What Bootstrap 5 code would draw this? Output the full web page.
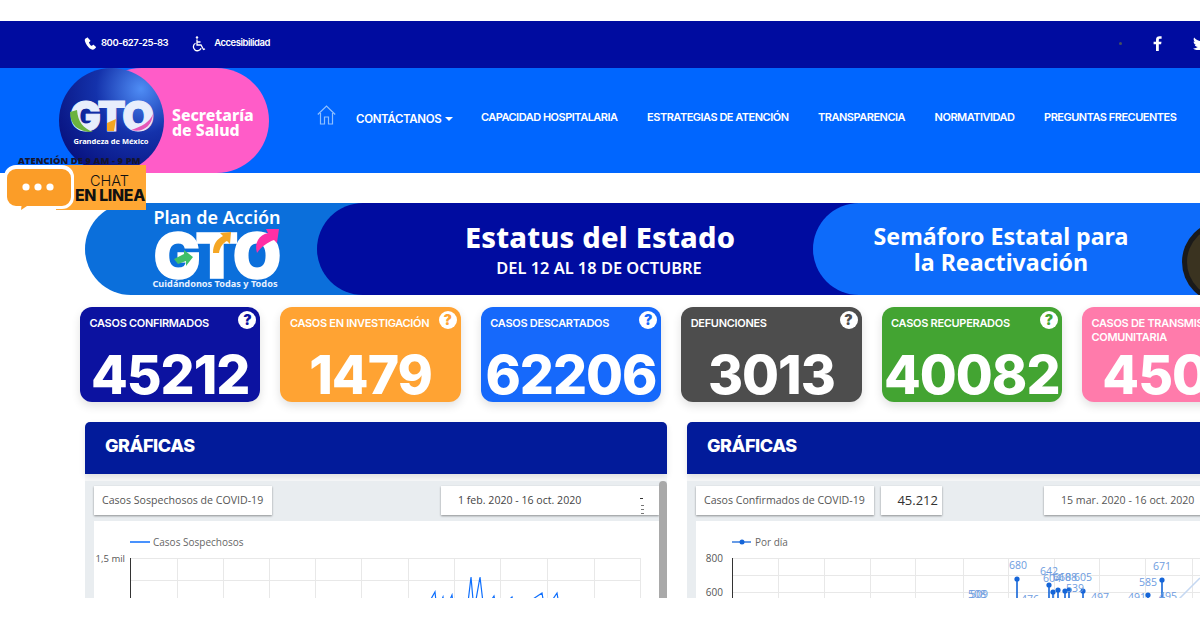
<!DOCTYPE html>
<html lang="es">
<head>
    <meta charset="UTF-8">
    <meta name="viewport" content="width=device-width, initial-scale=1.0">
    <title>Secretaría de Salud GTO</title>
    <link href="https://cdn.jsdelivr.net/npm/bootstrap@5.3.0/dist/css/bootstrap.min.css" rel="stylesheet">
    <style>
        html, body { height: 620px; overflow: hidden; background: #fff; }
        body { font-family: "Inter", "Liberation Sans", sans-serif; }
        .page-frame { margin-top: 21px; height: 577px; overflow: hidden; position: relative; }

        /* franja superior */
        .top-strip { height: 47px; background: #000ca0; color: #fff; font-size: 9.5px; font-weight: 600; padding-left: 84px; padding-bottom: 2px; letter-spacing: -.46px; }
        .top-strip svg { display: block; }
        .social-box { margin-left: auto; margin-right: -9px; gap: 31px; }
        .tiny-dot { width: 3px; height: 3px; border-radius: 50%; background: #45505f; }

        /* navbar */
        .main-bar { height: 105px; background: #0066ff; padding: 0; flex-wrap: nowrap; justify-content: flex-start; }
        .logo-box { margin-left: 59px; width: 210px; height: 105px; flex: none; }
        .home-link { margin-left: 48px; margin-right: 20px; margin-top: -14px; }
        .main-links { gap: 29.5px; flex-wrap: nowrap; white-space: nowrap; margin-top: -6px; }
        .main-links .nav-link { color: #fff; padding: 0; font-size: 11px; font-weight: 600; letter-spacing: -.5px; }
        .main-links .first-link { font-size: 11.5px; margin-top: 4px; margin-right: -2px; letter-spacing: -.33px; }
        .main-links .dropdown-toggle::after { vertical-align: .15em; margin-left: 4px; border-top-width: 4px; border-left-width: 4px; border-right-width: 4px; }

        /* chat */
        .chat-box { position: absolute; left: 6px; top: 134px; width: 140px; height: 60px; }
        .chat-hours { position: absolute; left: 12px; top: -1px; font-size: 9.3px; font-weight: 800; color: #15152e; white-space: nowrap; font-family: "Open Sans", sans-serif; letter-spacing: .1px; }
        .chat-label { position: absolute; left: 50px; top: 10px; width: 90px; height: 45px; background: #ffa733; color: #111; text-align: right; padding-right: 1px; line-height: 15px; padding-top: 8px; }
        .chat-label span { display: block; }
        .chat-label .chat-one { font-size: 14.5px; font-weight: 300; padding-right: 16px; }
        .chat-label .chat-two { font-size: 15.8px; font-weight: 800; letter-spacing: -.3px; white-space: nowrap; }
        .chat-bubble { position: absolute; left: -2px; top: 9px; }

        /* banner */
        .banner-wrap { margin: 30px 0 0 85px; width: 1200px; height: 92px; }
        .plan-part { background: #0b6fdb; border-radius: 46px 0 0 46px; color: #fff; font-family: "Noto Sans", sans-serif; height: 92px; }
        .plan-logo { width: 232px; flex: none; }
        .state-part { background: #000ca0; border-radius: 46px 0 0 46px; color: #fff; flex: 1; height: 92px; }
        .state-text { width: 496px; flex: none; text-align: center; font-family: "Noto Sans", sans-serif; padding-left: 68px; }
        .state-title { font-size: 29px; font-weight: 800; line-height: 30px; letter-spacing: .2px; margin-left: 2px; white-space: nowrap; }
        .state-date { font-size: 16.4px; font-weight: 600; line-height: 18px; margin-top: 7px; white-space: nowrap; }
        .light-part { background: #0d6bfa; border-radius: 46px 0 0 46px; flex: 1; height: 92px; overflow: hidden; }
        .light-text { width: 368px; flex: none; text-align: center; font-family: "Noto Sans", sans-serif; font-size: 23.2px; font-weight: 700; line-height: 26px; padding-left: 8px; white-space: nowrap; }
        .medal-icon { flex: none; margin-top: 0; }

        /* tarjetas */
        .stat-row { margin: 12px 0 0 80px; gap: 20px; width: 1300px; flex-wrap: nowrap; }
        .stat-box { width: 180.4px; height: 95px; flex: none; border: 0; border-radius: 12px; color: #fff; position: relative; box-shadow: 0 4px 10px rgba(0,0,0,.12); overflow: hidden; }
        .stat-name { font-size: 11px; font-weight: 600; line-height: 14px; position: absolute; left: 9.5px; top: 9px; letter-spacing: -.3px; white-space: nowrap; }
        .stat-num { font-family: "Inter", sans-serif; font-size: 53.5px; font-weight: 800; line-height: 60px; text-align: center; position: absolute; left: 0; right: 0; bottom: -3px; letter-spacing: -1px; white-space: nowrap; }
        .stat-help { position: absolute; right: 4px; top: 4px; width: 18px; height: 18px; border-radius: 50%; background: #fff; font-size: 14px; font-weight: 900; line-height: 18px; text-align: center; }
        .tone-navy { background: #0c12a0; } .tone-navy .stat-help { color: #0c12a0; }
        .tone-orange { background: #ffa333; } .tone-orange .stat-help { color: #ffa333; }
        .tone-blue { background: #1669fb; } .tone-blue .stat-help { color: #1669fb; }
        .tone-gray { background: #4d4d4d; } .tone-gray .stat-help { color: #4d4d4d; }
        .tone-green { background: #43a432; } .tone-green .stat-help { color: #43a432; }
        .tone-pink { background: #ff7bab; } .tone-pink .stat-help { color: #ff7bab; }

        /* paneles */
        .chart-row { margin: 20px 0 0 85px; gap: 20px; width: 1300px; flex-wrap: nowrap; }
        .chart-panel { width: 582px; flex: none; border: 0; background: #f7f8f9; border-radius: 12px 12px 0 0; }
        .chart-head { height: 52px; background: #021b9a; color: #fff; border-radius: 12px 12px 0 0; font-size: 18px; font-weight: 800; padding: 0 0 5px 20px; border: 0; letter-spacing: -.45px; box-shadow: 0 3px 6px rgba(0,0,0,.1); }
        .chart-frame { margin-top: 7px; height: 130px; background: #e9edf0; padding: 5px 8px 0 9px; position: relative; font-family: "Open Sans", sans-serif; overflow: hidden; }
        .control-row { height: 29px; gap: 7px; }
        .control-cell { height: 29px; flex: none; background: #fff; box-shadow: 0 1px 2px rgba(0,0,0,.4); font-size: 10.6px; color: #555; padding: 0 0 0 8px; white-space: nowrap; }
        .control-value { font-size: 13px; color: #333; width: 61px; justify-content: flex-end; padding-right: 4px; }
        .control-date { margin-left: auto; color: #444; }
        .cell-left { width: 178px; }
        .date-left { width: 218px; padding-left: 17px; position: relative; }
        .date-right { width: 230px; margin-left: 95px; padding-left: 17px; }
        .plot-area { margin-top: 6px; background: #fff; height: 90px; }
        .plot-area svg { display: block; }
        .plot-area text { font-family: "Open Sans", sans-serif; }
        .scroll-thumb { position: absolute; right: 0; top: 0; width: 8px; height: 130px; background: #a9a9a9; border-radius: 4px 4px 0 0; }
        .dots-more { position: absolute; left: 555px; top: 17px; width: 3px; height: 1px; background: #333; box-shadow: 1px 7px 0 -0px #777, 1px 11px 0 #777, 1px 15px 0 #777; }
    </style>
</head>
<body>
<div class="page-frame">
    <!-- franja superior -->
    <div class="top-strip d-flex align-items-center">
        <svg class="me-1" width="13" height="13" viewBox="0 0 16 16" fill="#fff"><path d="M3.6.8 1.5 2.2C.6 3 .8 5 2.3 8s3.800 5.600 6 6.900c1.800 1 3.300 1 4.200.2l2-1.800c.4-.4.400-.9 0-1.300l-2.400-2.200c-.4-.3-.8-.3-1.200 0l-1.100.9c-.3.200-.6.200-.9 0-1-.7-2.200-2.300-2.700-3.600-.1-.3 0-.6.200-.8l1.100-.8c.4-.3.500-.7.300-1.200L5 1.100C4.800.6 4.100.4 3.600.8z"/></svg>
        <span>800-627-25-83</span>
        <svg class="ms-4" width="14" height="16" viewBox="0 0 14 16" fill="none" stroke="#fff" stroke-width="1.300"><circle cx="5" cy="1.500" r="1.200" fill="#fff" stroke="none"/><path d="M5 3.500V9h4l2.500 4.500 1.500-.7M5 6h3.500"/><path d="M3.500 7.200a4 4 0 1 0 5.600 5"/></svg>
        <span class="ms-2">Accesibilidad</span>
        <div class="social-box d-flex align-items-center">
            <div class="tiny-dot"></div>
            <svg width="9" height="15" viewBox="0 0 9 15" fill="#fff"><path d="M3 15V8.300H.6V5.700H3V3.700C3 1.300 4.400.2 6.500.2c1 0 1.900.1 2.100.1v2.400H7.200C6 2.700 5.800 3.300 5.800 4.100v1.600h2.700l-.4 2.600H5.800V15z"/></svg>
            <svg width="16" height="13" viewBox="0 0 16 13" fill="#fff"><path d="M16 1.500c-.6.300-1.200.4-1.900.5.700-.4 1.200-1 1.400-1.800-.6.400-1.300.6-2.100.8A3.300 3.300 0 0 0 7.800 4C5.100 3.900 2.700 2.600 1.100.6.300 2.100.7 4 2.100 4.900c-.5 0-1-.2-1.500-.4 0 1.600 1.100 3 2.600 3.300-.5.100-1 .1-1.500 0 .4 1.300 1.600 2.200 3.100 2.300A6.600 6.600 0 0 1 0 11.500 9.300 9.300 0 0 0 14.400 3.200c.6-.4 1.200-1 1.600-1.700z"/></svg>
        </div>
    </div>

    <!-- navbar -->
    <nav class="navbar main-bar">
        <a class="logo-box d-block" href="#">
            <svg width="210" height="105" viewBox="0 0 210 105">
                <defs>
                    <radialGradient id="globeFill" cx=".78" cy=".2" r=".95">
                        <stop offset="0" stop-color="#4f8df5"/><stop offset=".45" stop-color="#1432ab"/><stop offset="1" stop-color="#07107c"/>
                    </radialGradient>
                </defs>
                <rect x="30" y="0" width="180" height="105" rx="52.500" fill="#ff5cc8"/>
                <circle cx="52.500" cy="52.500" r="52.500" fill="url(#globeFill)"/>
                <text x="52" y="63" text-anchor="middle" font-family="Inter" font-size="41" font-weight="900" letter-spacing="-2" fill="#e8eefc" stroke="#e8eefc" stroke-width="1">GTO</text>
                <path d="M11 44c0 13 8 20 23 20-10-4-15-10-16-22z" fill="#6bb33f"/>
                <path d="M48 63h7l2-12-9 4z" fill="#f5a623"/>
                <path d="M72 62c12 3 21-4 22-16-3 8-12 13-22 16z" fill="#e557b8"/>
                <text x="52" y="76" text-anchor="middle" font-family="Noto Sans" font-size="7.500" font-weight="700" fill="#fff">Grandeza de México</text>
                <text x="113" y="53" font-family="Noto Sans" font-size="15.800" font-weight="800" fill="#fff">Secretaría</text>
                <text x="113" y="68" font-family="Noto Sans" font-size="15.800" font-weight="800" fill="#fff">de Salud</text>
            </svg>
        </a>
        <a class="home-link" href="#">
            <svg width="19" height="20" viewBox="0 0 19 20" fill="none" stroke="#8fc0ff" stroke-width="1.200"><path d="M.8 9.500 9.500 1l8.700 8.500"/><path d="M3.500 8v11h4v-7h4v7h4V8"/></svg>
        </a>
        <ul class="navbar-nav main-links flex-row align-items-center">
            <li class="nav-item dropdown"><a class="nav-link first-link dropdown-toggle" href="#">CONTÁCTANOS</a></li>
            <li class="nav-item"><a class="nav-link" href="#">CAPACIDAD HOSPITALARIA</a></li>
            <li class="nav-item"><a class="nav-link" href="#">ESTRATEGIAS DE ATENCIÓN</a></li>
            <li class="nav-item"><a class="nav-link" href="#">TRANSPARENCIA</a></li>
            <li class="nav-item"><a class="nav-link" href="#">NORMATIVIDAD</a></li>
            <li class="nav-item"><a class="nav-link" href="#">PREGUNTAS FRECUENTES</a></li>
        </ul>
    </nav>

    <!-- chat -->
    <div class="chat-box">
        <div class="chat-hours">ATENCIÓN DE 9 AM - 9 PM</div>
        <div class="chat-label"><span class="chat-one">CHAT</span><span class="chat-two">EN LINEA</span></div>
        <svg class="chat-bubble" width="72" height="50" viewBox="0 0 72 50">
            <path d="M12 1h46a12 12 0 0 1 12 12v20a12 12 0 0 1-12 12H24l-9 5 1-5h-4A12 12 0 0 1 0 33V13A12 12 0 0 1 12 1z" fill="#fff"/>
            <path d="M12 5h46a9 9 0 0 1 9 9v19a9 9 0 0 1-9 9H23l-6 4 .5-4H12a9 9 0 0 1-9-9V14a9 9 0 0 1 9-9z" fill="#fb9d28"/>
            <circle cx="22" cy="23" r="3.600" fill="#fff"/><circle cx="34" cy="23" r="3.600" fill="#fff"/><circle cx="46" cy="23" r="3.600" fill="#fff"/>
        </svg>
    </div>

    <!-- banner -->
    <div class="banner-wrap">
        <div class="plan-part d-flex">
            <div class="plan-logo">
                <svg width="232" height="92" viewBox="0 0 232 92">
                    <text x="132" y="21" text-anchor="middle" font-family="Noto Sans" font-size="18" font-weight="600" fill="#fff">Plan de Acción</text>
                    <text x="131" y="75" text-anchor="middle" font-family="Inter" font-size="62" font-weight="900" letter-spacing="-3" fill="#fff" stroke="#fff" stroke-width="1.500">GTO</text>
                    <path d="M89 56l10-5 0-4 9 7-7 9 0-5-8 3z" fill="#3fbf6a"/>
                    <path d="M128 50c0-9 4-14 10-17l-3-3 11-1-1 12-3-3c-4 2-7 6-8 12z" fill="#f5a623"/>
                    <path d="M172 50c-3-10 2-18 11-20l-2-4 13 0-2 14-3-3c-6 2-12 6-17 13z" fill="#ff2fa5"/>
                    <text x="130" y="84" text-anchor="middle" font-family="Noto Sans" font-size="9.200" font-weight="700" fill="#e7f1ff">Cuidándonos Todas y Todos</text>
                </svg>
            </div>
            <div class="state-part d-flex">
                <div class="state-text d-flex flex-column justify-content-center">
                    <div class="state-title">Estatus del Estado</div>
                    <div class="state-date">DEL 12 AL 18 DE OCTUBRE</div>
                </div>
                <div class="light-part d-flex align-items-center text-white">
                    <div class="light-text">Semáforo Estatal para<br>la Reactivación</div>
                    <svg class="medal-icon" width="40" height="92" viewBox="0 0 40 92">
                        <circle cx="42" cy="59" r="41" fill="#1a1a1a"/>
                        <circle cx="42" cy="59" r="36" fill="#3a3320"/>
                        <circle cx="30" cy="85" r="10" fill="#f5b81f"/>
                    </svg>
                </div>
            </div>
        </div>
    </div>

    <!-- tarjetas -->
    <div class="stat-row d-flex">
        <div class="card stat-box tone-navy"><div class="stat-name">CASOS CONFIRMADOS</div><div class="stat-help">?</div><div class="stat-num">45212</div></div>
        <div class="card stat-box tone-orange"><div class="stat-name">CASOS EN INVESTIGACIÓN</div><div class="stat-help">?</div><div class="stat-num">1479</div></div>
        <div class="card stat-box tone-blue"><div class="stat-name">CASOS DESCARTADOS</div><div class="stat-help">?</div><div class="stat-num">62206</div></div>
        <div class="card stat-box tone-gray"><div class="stat-name">DEFUNCIONES</div><div class="stat-help">?</div><div class="stat-num">3013</div></div>
        <div class="card stat-box tone-green"><div class="stat-name">CASOS RECUPERADOS</div><div class="stat-help">?</div><div class="stat-num">40082</div></div>
        <div class="card stat-box tone-pink"><div class="stat-name">CASOS DE TRANSMISIÓN<br>COMUNITARIA</div><div class="stat-help">?</div><div class="stat-num">4505</div></div>
    </div>

    <!-- graficas -->
    <div class="chart-row d-flex">
        <div class="card chart-panel">
            <div class="card-header chart-head d-flex align-items-center">GRÁFICAS</div>
            <div class="chart-frame">
                <div class="control-row d-flex">
                    <div class="control-cell cell-left d-flex align-items-center">Casos Sospechosos de COVID-19</div>
                    <div class="control-cell control-date date-left d-flex align-items-center">1 feb. 2020 - 16 oct. 2020</div>
                </div>
                <div class="plot-area">
                    <svg width="565" height="90" viewBox="0 0 565 90">
                        <line x1="36" y1="21" x2="56" y2="21" stroke="#0d6efd" stroke-width="1.500"/>
                        <text x="59" y="25" font-size="10" fill="#666">Casos Sospechosos</text>
                        <text x="31" y="41" font-size="9.500" fill="#555" text-anchor="end">1,5 mil</text>
                        <g stroke="#e8e8e8" stroke-width="1" fill="none">
                            <path d="M37 37.500H546M37 59.500H546"/>
                            <path d="M83.500 37V90M129.500 37V90M175.500 37V90M221.500 37V90M267.500 37V90M314.500 37V90M360.500 37V90M406.500 37V90M453.500 37V90M500.500 37V90M546.500 37V90"/>
                        </g>
                        <line x1="36.500" y1="37" x2="36.500" y2="90" stroke="#333"/>
                        <path d="M330 90L341 71L343 90L349 76L351 90L358 74L360 90L369 78L373 90L377 56L380 90L386 56L390 90L400 75L403 90L418 76L421 90L448 72L451 90L463 72L466 90" fill="none" stroke="#0d6efd" stroke-width="1.200"/>
                    </svg>
                </div>
                <div class="dots-more"></div>
                <div class="scroll-thumb"></div>
            </div>
        </div>
        <div class="card chart-panel">
            <div class="card-header chart-head d-flex align-items-center">GRÁFICAS</div>
            <div class="chart-frame">
                <div class="control-row d-flex">
                    <div class="control-cell cell-left d-flex align-items-center">Casos Confirmados de COVID-19</div>
                    <div class="control-cell control-value d-flex align-items-center">45.212</div>
                    <div class="control-cell date-right d-flex align-items-center">15 mar. 2020 - 16 oct. 2020</div>
                </div>
                <div class="plot-area">
                    <svg width="520" height="90" viewBox="696 521 520 90">
                        <line x1="732" y1="542" x2="751" y2="542" stroke="#1565d8" stroke-width="1.300"/>
                        <circle cx="742" cy="542" r="2.500" fill="#1565d8"/>
                        <text x="755" y="546" font-size="10" fill="#666">Por día</text>
                        <text x="723" y="562" font-size="10" fill="#555" text-anchor="end">800</text>
                        <text x="723" y="596" font-size="10" fill="#555" text-anchor="end">600</text>
                        <g stroke="#e8e8e8" fill="none">
                            <path d="M732 558.500H1210M732 575.500H1210M732 592.500H1210"/>
                            <path d="M778.500 558V611M824.500 558V611M870.500 558V611M915.500 558V611M963.500 558V611M1008.500 558V611M1054.500 558V611M1099.500 558V611M1145.500 558V611M1192.500 558V611"/>
                        </g>
                        <line x1="732.500" y1="558" x2="732.500" y2="611" stroke="#333"/>
                        <path d="M1178 600L1200 578" stroke="#c5d8f2" stroke-width="1.500" fill="none"/>
                        <g stroke="#1565d8" stroke-width="1.600" fill="none">
                            <path d="M1017 579V611M1049 585V611M1053 592V611M1058 590V611M1065 591V611M1069 590V611M1083 591V611M1148 595V611M1162 580V611M1165 598V611"/>
                        </g>
                        <g fill="#1565d8">
                            <circle cx="1017" cy="579" r="2.600"/><circle cx="1049" cy="585" r="2.600"/><circle cx="1053" cy="592" r="2.600"/><circle cx="1058" cy="590" r="2.600"/><circle cx="1065" cy="591" r="2.600"/><circle cx="1069" cy="590" r="2.600"/><circle cx="1083" cy="591" r="2.600"/><circle cx="1148" cy="595" r="2.600"/><circle cx="1162" cy="580" r="2.600"/>
                        </g>
                        <g font-size="10.500" fill="#6d9ce0" text-anchor="middle">
                            <text x="1018" y="569">680</text>
                            <text x="1049" y="575">642</text>
                            <text x="1052" y="582">604</text>
                            <text x="1062" y="581">618</text>
                            <text x="1068" y="581">608</text>
                            <text x="1083" y="581">605</text>
                            <text x="1075" y="592">539</text>
                            <text x="1162" y="570">671</text>
                            <text x="1148" y="586">585</text>
                            <text x="977" y="598">508</text>
                            <text x="979" y="598">509</text>
                            <text x="1100" y="601">497</text>
                            <text x="1137" y="601">491</text>
                            <text x="1168" y="600">495</text>
                            <text x="1030" y="603">476</text>
                        </g>
                    </svg>
                </div>
            </div>
        </div>
    </div>
</div>
<script src="https://cdn.jsdelivr.net/npm/bootstrap@5.3.0/dist/js/bootstrap.bundle.min.js"></script>
</body>
</html>
